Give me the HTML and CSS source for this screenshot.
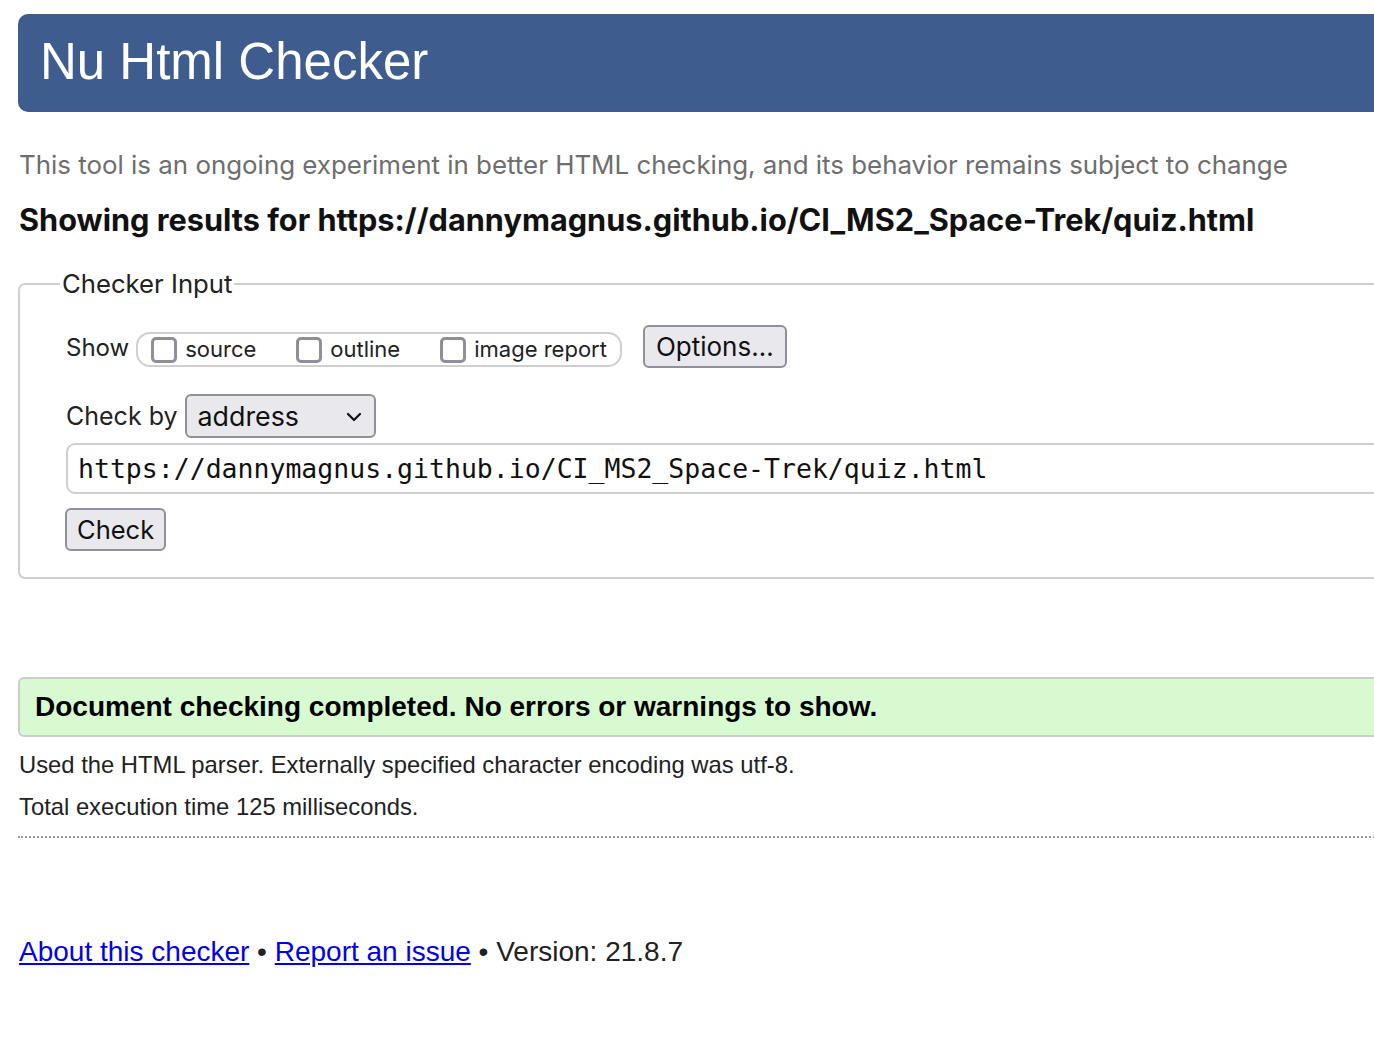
FILE: index.html
```html
<!DOCTYPE html>
<html lang="en">
<head>
<meta charset="utf-8">
<title>Showing results for https://dannymagnus.github.io/CI_MS2_Space-Trek/quiz.html - Nu Html Checker</title>
<link rel="stylesheet" href="styles.css">
</head>
<body>
<div class="page">
  <header class="banner"><h1>Nu Html Checker</h1></header>
  <p class="intro">This tool is an ongoing experiment in better HTML checking, and its behavior remains subject to change</p>
  <h2 class="showing">Showing results for https://dannymagnus.github.io/CI_MS2_Space-Trek/quiz.html</h2>
  <form class="checker">
    <fieldset class="input-set">
      <legend>Checker Input</legend>
      <div class="fields">
        <div class="row show-row">
          <span class="lbl">Show</span>
          <div class="opts">
            <label class="opt"><span class="cb"></span>source</label>
            <label class="opt"><span class="cb"></span>outline</label>
            <label class="opt"><span class="cb"></span>image report</label>
          </div>
          <span class="btn options">Options…</span>
        </div>
        <div class="row by-row">
          <span class="lbl by">Check by</span>
          <span class="select">address<svg class="chev" width="16" height="10" viewBox="0 0 16 10"><path d="M2 2 L8 8 L14 2" fill="none" stroke="#111" stroke-width="2.2" stroke-linecap="round" stroke-linejoin="round"/></svg></span>
        </div>
        <div class="url">https://dannymagnus.github.io/CI_MS2_Space-Trek/quiz.html</div>
        <div class="row"><span class="btn check">Check</span></div>
      </div>
    </fieldset>
  </form>
  <div class="result">Document checking completed. No errors or warnings to show.</div>
  <p class="details">Used the HTML parser. Externally specified character encoding was utf-8.</p>
  <p class="details">Total execution time 125 milliseconds.</p>
  <hr class="dots">
  <p class="footer"><a href="#">About this checker</a> • <a href="#">Report an issue</a> • Version: 21.8.7</p>
</div>
</body>
</html>
```

FILE: styles.css
```css
html, body {
  margin: 0;
  padding: 0;
  overflow: hidden;
  background: #fff;
}
.page {
  width: calc(100% + 40px);
  box-sizing: border-box;
  padding: 14px 0 0 18px;
  font-family: "Liberation Sans", Arial, sans-serif;
  color: #222;
}
.banner {
  height: 98px;
  background: #3e5c8e;
  border-radius: 10px;
  display: flex;
  align-items: center;
  padding-left: 22px;
}
.banner h1 {
  margin: 0;
  font-family: "Liberation Sans", Arial, sans-serif;
  font-weight: normal;
  font-size: 51px;
  color: #fff;
  line-height: 1;
  position: relative;
  top: -2px;
}
.intro {
  margin: 38px 0 0 1px;
  font-family: Inter, "Open Sans", sans-serif;
  font-size: 25.9px;
  line-height: 30px;
  color: #6e6e6e;
}
.showing {
  margin: 22px 0 0 1px;
  font-family: Inter, "Open Sans", sans-serif;
  font-weight: bold;
  font-size: 30.7px;
  line-height: 36px;
  color: #111;
}
.checker {
  margin: 30px 0 0 0;
}
.input-set {
  margin: 0;
  border: 2px solid #cfcfcf;
  border-radius: 7px;
  padding: 26px 0 26px 40px;
}
.input-set legend {
  padding: 0 2px;
  font-family: Inter, "Open Sans", sans-serif;
  font-size: 25.7px;
  color: #222;
}
.fields {
  margin-left: 6px;
  display: flex;
  flex-direction: column;
  font-family: Inter, "Open Sans", sans-serif;
  font-size: 24px;
  color: #222;
}
.row {
  display: flex;
  align-items: center;
}
.lbl {
  margin-right: 7px;
}
.lbl.by {
  font-size: 25px;
  margin-right: 7px;
}
.show-row {
  height: 44px;
}
.opts {
  display: flex;
  align-items: center;
  height: 35px;
  box-sizing: border-box;
  border: 2px solid #cfcfcf;
  border-radius: 14px;
  padding: 0 13px 0 13px;
  margin-top: 4px;
  font-size: 22px;
}
.opt {
  display: flex;
  align-items: center;
  margin-right: 40px;
}
.opt:last-child {
  margin-right: 0;
}
.cb {
  width: 26px;
  height: 26px;
  box-sizing: border-box;
  border: 3px solid #8f8e9a;
  border-radius: 5px;
  background: #fff;
  margin-right: 8px;
  margin-top: 2px;
}
.btn {
  display: inline-flex;
  align-items: center;
  box-sizing: border-box;
  height: 43px;
  padding: 0 11px;
  background: #e9e9ed;
  border: 2px solid #8f8f9d;
  border-radius: 6px;
  font-size: 26px;
  color: #111;
}
.options {
  margin-left: 21px;
  margin-top: -1px;
}
.by-row {
  margin-top: 25px;
}
.select {
  display: inline-flex;
  align-items: center;
  justify-content: space-between;
  box-sizing: border-box;
  width: 191px;
  height: 44px;
  padding: 0 12px 0 11px;
  background: #e9e9ed;
  border: 2px solid #8f8f9d;
  border-radius: 6px;
  font-size: 26.8px;
  color: #111;
}
.chev {
  margin-top: 2px;
}
.url {
  margin-top: 5px;
  height: 51px;
  box-sizing: border-box;
  border: 2px solid #cfcfcf;
  border-radius: 9px;
  padding-left: 10px;
  display: flex;
  align-items: center;
  font-family: "DejaVu Sans Mono", "Liberation Mono", monospace;
  font-size: 26.5px;
  color: #111;
}
.check {
  margin-top: 14px;
  margin-left: -1px;
  height: 43px;
  padding: 0 10px;
  font-size: 25.5px;
}
.result {
  margin-top: 98px;
  height: 60px;
  box-sizing: border-box;
  background: #d8fad1;
  border: 2px solid #cccccc;
  border-radius: 6px;
  padding-left: 15px;
  display: flex;
  align-items: center;
  font-weight: bold;
  font-size: 28px;
  color: #000;
}
.details {
  margin: 0;
  margin-top: 14px;
  font-size: 23.8px;
  line-height: 28px;
  padding-left: 1px;
}
.details + .details {
  margin-top: 14px;
}
.dots {
  margin: 15px 0 0 0;
  border: 0;
  border-top: 2px dotted #9a9a9a;
  height: 0;
}
.footer {
  margin: 97px 0 0 1px;
  font-size: 28px;
  line-height: 34px;
}
.footer a {
  color: #0000ee;
  text-decoration: underline;
}
```
